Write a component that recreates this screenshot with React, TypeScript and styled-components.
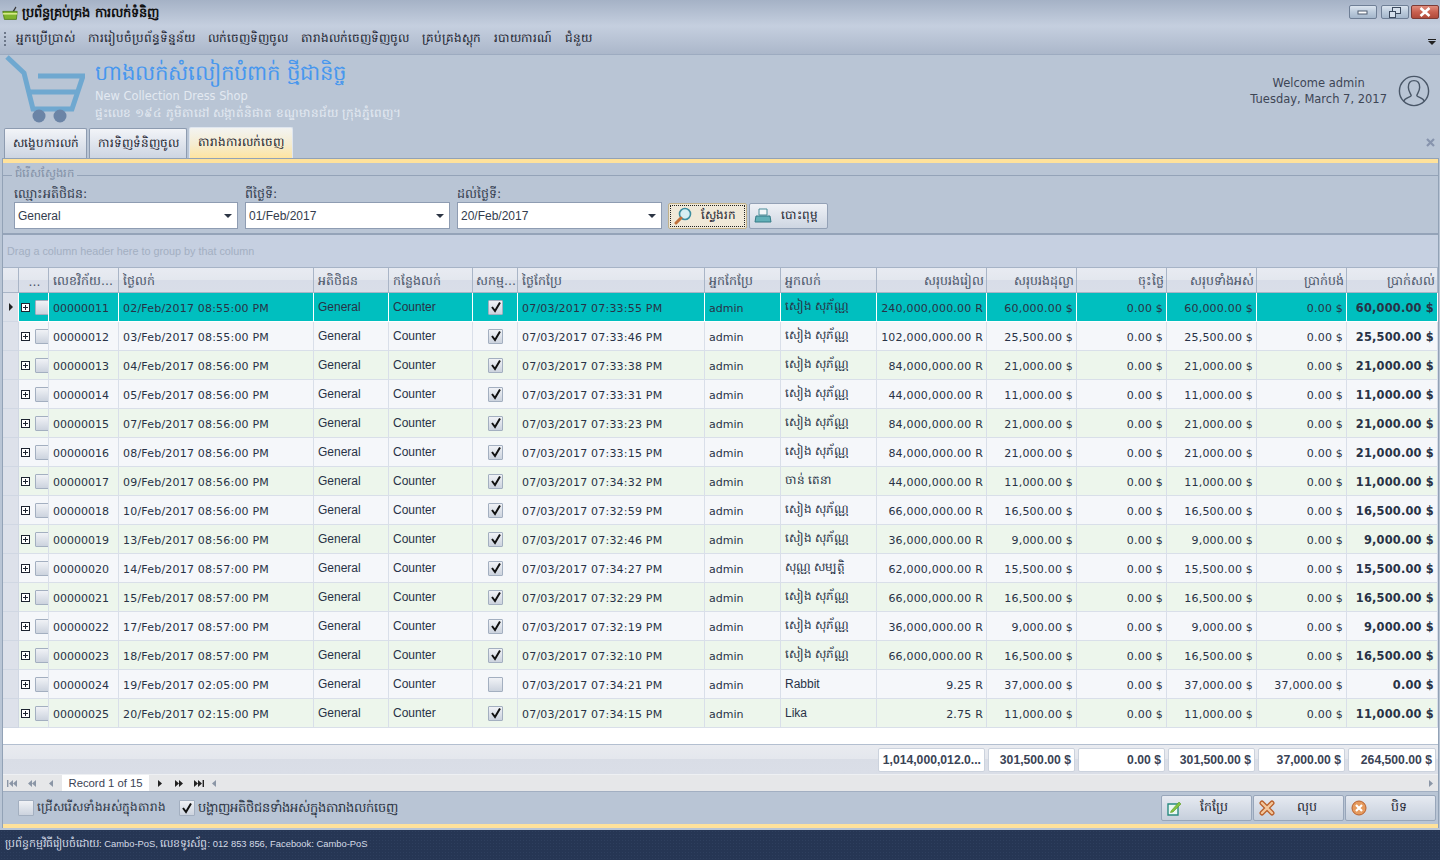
import * as React from 'react';
import styled, { createGlobalStyle } from 'styled-components';

const FONT = '"DejaVu Sans", "Noto Sans", sans-serif';
const PLAIN = '"Liberation Sans", "DejaVu Sans", sans-serif';
const COLUMNS = '16px 30px 70px 195px 75px 84px 45px 187px 76px 96px 110px 90px 90px 90px 90px 1fr';

const GlobalStyle = createGlobalStyle`
  html, body {
    margin: 0;
    padding: 0;
    height: 860px;
    overflow: hidden;
    background: #b9c5d5;
    font-family: ${FONT};
    font-size: 11px;
    color: #333c4e;
  }
`;

const Page = styled.div`
  width: 1440px;
  height: 860px;
  display: flex;
  flex-direction: column;
  overflow: hidden;
`;

// window chrome
const TitleBar = styled.div`
  height: 26px;
  flex: none;
  display: flex;
  align-items: center;
  padding: 0 1px 0 2px;
  gap: 4px;
  background: linear-gradient(#a5b2c6, #c5cfdf);
`;

const TitleText = styled.div`
  flex: 1;
  font-size: 13px;
  font-weight: bold;
  color: #111;
`;

const WinButtons = styled.div`
  display: flex;
  gap: 2px;
  margin-top: -2px;
`;

const WinButton = styled.div<{ $close?: boolean }>`
  width: 28px;
  height: 14px;
  box-sizing: border-box;
  border: 1px solid ${p => (p.$close ? '#7c3b36' : '#6f7f96')};
  border-radius: 2px;
  display: flex;
  align-items: center;
  justify-content: center;
  background: ${p => (p.$close
    ? 'linear-gradient(#e08c7c 0%, #c9604f 50%, #b04a3a 100%)'
    : 'linear-gradient(#dbe4ef 0%, #bccbdc 50%, #a4b6cb 100%)')};
  &:first-child {
    margin-right: 2px;
  }
`;

const MenuBar = styled.div`
  height: 29px;
  box-sizing: border-box;
  flex: none;
  display: flex;
  align-items: center;
  padding: 0 4px 3px 4px;
  border-bottom: 1px solid #9dabc0;
  background: linear-gradient(#c5cfdf, #abb7ca);
`;

const MenuGrip = styled.div`
  width: 2px;
  height: 14px;
  margin-right: 10px;
  background: repeating-linear-gradient(#6c7789 0 2px, transparent 2px 4px);
`;

const MenuItem = styled.div`
  margin-right: 13px;
  font-size: 12px;
  color: #1c2330;
`;

const MenuOverflow = styled.div`
  margin-left: auto;
  margin-top: 8px;
`;

// shop header
const ShopHeader = styled.div`
  height: 72px;
  flex: none;
  display: flex;
  padding-left: 5px;
`;

const ShopInfo = styled.div`
  margin-left: 10px;
  padding-top: 3px;
  display: flex;
  flex-direction: column;
`;

const ShopName = styled.div`
  font-size: 21.2px;
  line-height: 30px;
  color: #4797ee;
`;

const ShopSub = styled.div`
  font-size: 11.4px;
  line-height: 16px;
  color: #e3e9f1;
`;

const ShopAddress = styled.div`
  font-size: 12px;
  line-height: 18px;
  color: #e3e9f1;
`;

const Welcome = styled.div`
  margin-left: auto;
  padding: 20px 10px 0 0;
  display: flex;
  gap: 11px;
  color: #3e4655;
  font-size: 11.5px;
  line-height: 16px;
  text-align: center;
`;

// tabs
const TabRow = styled.div`
  height: 31px;
  flex: none;
  display: flex;
  align-items: flex-end;
  padding-left: 4px;
  gap: 2px;
`;

const Tab = styled.div<{ $active?: boolean; $w: number }>`
  width: ${p => p.$w}px;
  height: ${p => (p.$active ? 31 : 30)}px;
  box-sizing: border-box;
  display: flex;
  align-items: center;
  justify-content: center;
  font-size: 12px;
  color: #1c2330;
  border: 1px solid ${p => (p.$active ? '#dfe6ef' : '#8d9bb0')};
  border-bottom: none;
  border-radius: 2px 2px 0 0;
  background: ${p => (p.$active
    ? 'linear-gradient(#f3f4f2 0%, #f5ecd0 55%, #ffe4a0 100%)'
    : 'linear-gradient(#f2f4f8, #cdd5e2)')};
`;

const TabClose = styled.div`
  margin-left: auto;
  align-self: center;
  margin-right: 5px;
  display: flex;
`;

const Content = styled.div`
  flex: none;
  height: 670px;
  margin: 0 1px 0 2px;
  display: flex;
  flex-direction: column;
  border: 1px solid #92a2b6;
  border-bottom: none;
  box-sizing: border-box;
`;

const YellowStrip = styled.div`
  height: 4px;
  flex: none;
  background: #ffe29b;
`;

// search box
const SearchGroup = styled.div`
  height: 72px;
  flex: none;
  position: relative;
  box-sizing: border-box;
  padding: 20px 0 0 11px;
  display: flex;
  align-items: flex-end;
  border-bottom: 2px solid #94a3b8;
`;

const GroupLegend = styled.div`
  position: absolute;
  top: 3px;
  left: 9px;
  padding: 0 3px;
  background: #b9c5d5;
  color: #8290a6;
  font-size: 11.6px;
`;

const GroupRule = styled.div`
  position: absolute;
  top: 12px;
  left: 0;
  right: 0;
  height: 1px;
  background: #94a3b8;
`;

const SearchForm = styled.div`
  display: flex;
  align-items: flex-end;
  gap: 7px;
  padding-bottom: 4px;
`;

const Field = styled.div<{ $w: number }>`
  width: ${p => p.$w}px;
`;

const FieldLabel = styled.div`
  font-size: 12.6px;
  line-height: 16px;
  color: #333c4e;
`;

const Combo = styled.div`
  height: 27px;
  box-sizing: border-box;
  padding: 0 5px 0 3px;
  display: flex;
  align-items: center;
  justify-content: space-between;
  background: #fff;
  border: 1px solid #8e9cb2;
  font-family: ${PLAIN};
  font-size: 12px;
  color: #333c4e;
`;

const Caret = styled.div`
  width: 0;
  height: 0;
  border-left: 4px solid transparent;
  border-right: 4px solid transparent;
  border-top: 4px solid #2c3544;
`;

const SearchButtons = styled.div`
  display: flex;
  gap: 2px;
  margin-left: -1px;
`;

const ActionButton = styled.div<{ $focused?: boolean }>`
  width: 79px;
  height: 26px;
  box-sizing: border-box;
  display: flex;
  align-items: center;
  justify-content: center;
  gap: 9px;
  padding-right: 6px;
  font-size: 12px;
  color: #1c2330;
  border: 1px solid ${p => (p.$focused ? '#bfb08a' : '#93a1b6')};
  border-radius: 2px;
  background: ${p => (p.$focused
    ? '#f0e9d8'
    : 'linear-gradient(#eef1f6, #ced6e2)')};
  outline: ${p => (p.$focused ? '1px dotted #222' : 'none')};
  outline-offset: -3px;
`;

// grid
const GroupPanel = styled.div`
  height: 33px;
  box-sizing: border-box;
  flex: none;
  display: flex;
  align-items: center;
  padding-left: 4px;
  background: #c6d0e1;
  color: #a3afc2;
  font-family: ${PLAIN};
  font-size: 10.8px;
  border-bottom: 1px solid #a6b3c6;
`;

const Grid = styled.div`
  flex: none;
  background: #fff;
`;

const Row = styled.div<{ $h?: number }>`
  display: grid;
  grid-template-columns: ${COLUMNS};
  height: ${p => p.$h || 29}px;
  box-sizing: border-box;
`;

const HeadCell = styled.div<{ $right?: boolean; $center?: boolean }>`
  display: flex;
  align-items: center;
  justify-content: ${p => (p.$right ? 'flex-end' : p.$center ? 'center' : 'flex-start')};
  padding: 3px 2px 0 4px;
  overflow: hidden;
  white-space: nowrap;
  font-size: 12.5px;
  color: #4a5468;
  border-right: 1px solid #a9b5c7;
  border-bottom: 1px solid #a9b5c7;
  background: linear-gradient(#e8ebf2 0%, #e3e7ee 50%, #d8dde8 50%, #d9dee8 100%);
`;

const Indicator = styled.div<{ $selected?: boolean }>`
  display: flex;
  align-items: center;
  justify-content: center;
  background: #dde1ea;
  border-bottom: 1px solid #d0d7e3;
  border-right: 1px solid ${p => (p.$selected ? '#fff' : '#d0d7e3')};
`;

const Arrow = styled.div`
  width: 0;
  height: 0;
  border-top: 4px solid transparent;
  border-bottom: 4px solid transparent;
  border-left: 4px solid #222;
`;

const rowBg = (selected: boolean, odd: boolean) => (selected ? '#00bfbf' : odd ? '#edf6ec' : '#f5f7fa');

type CellProps = {
  $selected: boolean;
  $odd: boolean;
  $right?: boolean;
  $bold?: boolean;
  $center?: boolean;
  $plain?: boolean;
  $tight?: boolean;
};

const Cell = styled.div<CellProps>`
  display: flex;
  align-items: center;
  justify-content: ${p => (p.$right ? 'flex-end' : p.$center ? 'center' : 'flex-start')};
  padding: ${p => (p.$plain ? '0 3px 0 4px' : '2px 3px 0 4px')};
  overflow: hidden;
  white-space: nowrap;
  font-family: ${p => (p.$plain ? PLAIN : FONT)};
  font-size: ${p => (p.$plain ? 12 : p.$bold ? 11.4 : 11)}px;
  letter-spacing: ${p => (p.$plain || p.$tight ? 0 : 0.2)}px;
  font-weight: ${p => (p.$bold ? 'bold' : 'normal')};
  color: #283246;
  background: ${p => rowBg(p.$selected, p.$odd)};
  border-right: 1px solid ${p => (p.$selected ? '#fff' : '#d9dfe9')};
  border-bottom: 1px solid ${p => (p.$selected ? '#fff' : '#d9dfe9')};
`;

const ExpandCell = styled(Cell)`
  padding: 0 0 0 2px;
  gap: 5px;
`;

const PlusBox = styled.div`
  width: 9px;
  height: 9px;
  flex: none;
  position: relative;
  box-sizing: border-box;
  border: 1px solid #1c2330;
  background: #fff;
  &::before {
    content: '';
    position: absolute;
    left: 1px;
    right: 1px;
    top: 3px;
    height: 1px;
    background: #1c2330;
  }
  &::after {
    content: '';
    position: absolute;
    top: 1px;
    bottom: 1px;
    left: 3px;
    width: 1px;
    background: #1c2330;
  }
`;

const CheckBox = styled.div<{ $size?: number }>`
  width: ${p => p.$size || 15}px;
  height: ${p => p.$size || 15}px;
  flex: none;
  box-sizing: border-box;
  display: flex;
  align-items: center;
  justify-content: center;
  border: 1px solid #a3afc0;
  border-radius: 1px;
  background: linear-gradient(#f0f2f6, #ccd3de);
`;

const FooterCell = styled.div`
  display: flex;
  align-items: center;
  justify-content: flex-end;
  height: 24px;
  margin: 3px 2px 0 1px;
  padding: 0 3px;
  box-sizing: border-box;
  overflow: hidden;
  white-space: nowrap;
  font-family: ${PLAIN};
  font-weight: bold;
  font-size: 12.2px;
  color: #3a4355;
  background: #fff;
  border: 1px solid #cbd2dd;
  border-radius: 2px;
`;

const FooterBand = styled(Row)`
  background: linear-gradient(#e9ebf0 0%, #e4e7ed 48%, #d9dde6 48%, #dadee7 100%);
  border-top: 1px solid #b3bfd0;
`;

const Spacer = styled.div`
  height: 16px;
  background: #fff;
`;

const Navigator = styled.div`
  height: 18px;
  display: flex;
  align-items: center;
  background: #e6e7e9;
  border-top: 1px solid #eef0f3;
  border-bottom: 1px solid #a2afc2;
  color: #3a4355;
  font-family: ${PLAIN};
  font-size: 11.3px;
  box-sizing: border-box;
`;

const NavButton = styled.div`
  width: 19.5px;
  display: flex;
  justify-content: center;
`;

const NavRecord = styled.div`
  width: 87px;
  box-sizing: border-box;
  padding-left: 7px;
  margin-right: 1px;
  line-height: 16px;
  background: #fff;
`;

const NavTrack = styled.div`
  flex: 1;
  display: flex;
  align-items: center;
  justify-content: space-between;
  padding: 0 5px 0 4px;
`;

// bottom actions
const BottomBar = styled.div`
  flex: 1;
  display: flex;
  align-items: center;
  padding: 0 2px 0 15px;
`;

const CheckItem = styled.div<{ $fs: number }>`
  display: flex;
  align-items: center;
  gap: 3px;
  margin-right: 13px;
  font-size: ${p => p.$fs}px;
  color: #2b3342;
`;

const BottomButtons = styled.div`
  margin-left: auto;
  display: flex;
  gap: 1px;
`;

const BottomButton = styled.div`
  width: 91px;
  height: 26px;
  box-sizing: border-box;
  display: flex;
  align-items: center;
  padding: 0 5px;
  font-size: 12.6px;
  color: #1c2330;
  border: 1px solid #98a6ba;
  border-radius: 2px;
  background: linear-gradient(#e6eaf1, #c6cfdc);
`;

const BottomLabel = styled.span`
  flex: 1;
  text-align: center;
`;

const StatusBar = styled.div`
  height: 30px;
  box-sizing: border-box;
  margin-top: auto;
  flex: none;
  display: flex;
  align-items: center;
  padding: 0 0 3px 5px;
  background-color: #263654;
  background-image: radial-gradient(#2e3f5e 1px, transparent 1px);
  background-size: 3px 3px;
  color: #d5dbe6;
  font-family: ${PLAIN};
  font-size: 9.4px;
  white-space: pre;
`;

const StatusKhmer = styled.span`
  font-family: ${FONT};
  font-size: 11px;
`;

// icons
const BasketIcon = () => (
  <svg width="16" height="18" viewBox="0 0 20 18">
    <path d="M13 7 L17 1 L18 2 L15 7Z" fill="#333" />
    <path d="M1 7 H19 L18 17 H3Z" fill="#7fb42e" stroke="#4d7a17" />
    <path d="M1 10 H19" stroke="#d4e88a" strokeWidth="2" />
  </svg>
);

const CartLogo = () => (
  <svg width="80" height="70" viewBox="0 0 80 70">
    <path d="M2 2 L19 18 L28 54 H67 L78 21 H33" fill="none" stroke="#6fa8d0" strokeWidth="5" />
    <path d="M25 37 H72" stroke="#6fa8d0" strokeWidth="5" />
    <circle cx="34" cy="61" r="6.5" fill="#6b84a6" />
    <circle cx="55" cy="61" r="6.5" fill="#6b84a6" />
  </svg>
);

const UserIcon = () => (
  <svg width="32" height="32" viewBox="0 0 34 34" fill="none" stroke="#4a5768" strokeWidth="1.5">
    <circle cx="17" cy="17" r="15.5" />
    <path d="M6 28 C7 24 13 24 14 22 C14 20 11 18 11 13 C11 8 14 6 17 6 C20 6 23 8 23 13 C23 18 20 20 20 22 C21 24 27 24 28 28" />
  </svg>
);

const SearchIcon = () => (
  <svg width="18" height="18" viewBox="0 0 18 18">
    <circle cx="11" cy="7" r="5.5" fill="#d5eef2" stroke="#3c8ea0" strokeWidth="1.6" />
    <path d="M7 11 L2 16" stroke="#c0703a" strokeWidth="3" strokeLinecap="round" />
  </svg>
);

const PrintIcon = () => (
  <svg width="18" height="16" viewBox="0 0 18 16">
    <path d="M5 1 H13 V7 H5Z" fill="#f3f7f8" stroke="#4a8c99" />
    <path d="M2 8 H16 L17 14 H1Z" fill="#62b0b8" stroke="#357a86" />
  </svg>
);

const CheckMark = () => (
  <svg width="12" height="12" viewBox="0 0 12 12">
    <path d="M2 6 L5 10 L10 1.5" fill="none" stroke="#111" strokeWidth="2" />
  </svg>
);

const EditIcon = () => (
  <svg width="15" height="15" viewBox="0 0 15 15">
    <path d="M1 3 H11 V14 H1Z" fill="#eaf7f3" stroke="#2a8a80" strokeWidth="1.4" />
    <path d="M4 10 L12 1 L14 3 L6 11 L3.5 11.5Z" fill="#84c341" stroke="#5a9a22" strokeWidth="0.6" />
  </svg>
);

const DeleteIcon = () => (
  <svg width="16" height="16" viewBox="0 0 16 16">
    <path d="M3 3 L13 13 M13 3 L3 13" stroke="#b9602c" strokeWidth="5" strokeLinecap="round" />
    <path d="M3 3 L13 13 M13 3 L3 13" stroke="#f3c79c" strokeWidth="2.4" strokeLinecap="round" />
  </svg>
);

const CloseIcon = () => (
  <svg width="16" height="16" viewBox="0 0 16 16">
    <circle cx="8" cy="8" r="7" fill="#e59a5e" stroke="#b9602c" />
    <path d="M5 5 L11 11 M11 5 L5 11" stroke="#fff" strokeWidth="2.2" />
  </svg>
);

const TabCloseIcon = () => (
  <svg width="9" height="9" viewBox="0 0 9 9"><path d="M1 1 L8 8 M8 1 L1 8" stroke="#8794ad" strokeWidth="2.2" /></svg>
);

// navigator glyph: a run of triangles, optionally with an end bar
const NavIcon = ({ dir, count, bar, dim }: { dir: 'l' | 'r'; count: number; bar?: boolean; dim?: boolean }) => {
  const color = dim ? '#8b96a6' : '#222';
  const offset = bar ? 2 : 0;
  const tris = Array.from({ length: count }, (_, i) => {
    const x = offset + i * 4;
    return `M${x + 4} 0 L${x} 3.5 L${x + 4} 7Z`;
  }).join(' ');
  const w = offset + count * 4 + 1;
  return (
    <svg width={w} height="7" viewBox={`0 0 ${w} 7`} style={dir === 'r' ? { transform: 'scaleX(-1)' } : undefined}>
      <path d={tris} fill={color} />
      {bar && <rect x="0" y="0" width="1.4" height="7" fill={color} />}
    </svg>
  );
};

const MIN = (
  <svg width="12" height="8" viewBox="0 0 12 8"><rect x="1" y="3" width="9" height="3" fill="#fff" stroke="#4c5a6e" /></svg>
);
const RESTORE = (
  <svg width="12" height="11" viewBox="0 0 12 11" fill="#d6e0ec" stroke="#3c4a5e">
    <rect x="3.5" y="0.5" width="8" height="6" />
    <rect x="0.5" y="4.5" width="6" height="6" />
  </svg>
);
const CLOSE_X = (
  <svg width="12" height="10" viewBox="0 0 12 10"><path d="M1.5 1 L10.5 9 M10.5 1 L1.5 9" stroke="#fff" strokeWidth="2.6" /></svg>
);

const SOPHAN = 'សៀង សុភ័ណ្ណ';

const ROWS = [
  { id: '00000011', sale: '02/Feb/2017 08:55:00 PM', mod: '07:33:55', seller: SOPHAN, riel: '240,000,000.00', usd: '60,000.00' },
  { id: '00000012', sale: '03/Feb/2017 08:55:00 PM', mod: '07:33:46', seller: SOPHAN, riel: '102,000,000.00', usd: '25,500.00' },
  { id: '00000013', sale: '04/Feb/2017 08:56:00 PM', mod: '07:33:38', seller: SOPHAN, riel: '84,000,000.00', usd: '21,000.00' },
  { id: '00000014', sale: '05/Feb/2017 08:56:00 PM', mod: '07:33:31', seller: SOPHAN, riel: '44,000,000.00', usd: '11,000.00' },
  { id: '00000015', sale: '07/Feb/2017 08:56:00 PM', mod: '07:33:23', seller: SOPHAN, riel: '84,000,000.00', usd: '21,000.00' },
  { id: '00000016', sale: '08/Feb/2017 08:56:00 PM', mod: '07:33:15', seller: SOPHAN, riel: '84,000,000.00', usd: '21,000.00' },
  { id: '00000017', sale: '09/Feb/2017 08:56:00 PM', mod: '07:34:32', seller: 'ចាន់ តេនា', riel: '44,000,000.00', usd: '11,000.00' },
  { id: '00000018', sale: '10/Feb/2017 08:56:00 PM', mod: '07:32:59', seller: SOPHAN, riel: '66,000,000.00', usd: '16,500.00' },
  { id: '00000019', sale: '13/Feb/2017 08:56:00 PM', mod: '07:32:46', seller: SOPHAN, riel: '36,000,000.00', usd: '9,000.00' },
  { id: '00000020', sale: '14/Feb/2017 08:57:00 PM', mod: '07:34:27', seller: 'សុណ្ណ សម្បត្តិ', riel: '62,000,000.00', usd: '15,500.00' },
  { id: '00000021', sale: '15/Feb/2017 08:57:00 PM', mod: '07:32:29', seller: SOPHAN, riel: '66,000,000.00', usd: '16,500.00' },
  { id: '00000022', sale: '17/Feb/2017 08:57:00 PM', mod: '07:32:19', seller: SOPHAN, riel: '36,000,000.00', usd: '9,000.00' },
  { id: '00000023', sale: '18/Feb/2017 08:57:00 PM', mod: '07:32:10', seller: SOPHAN, riel: '66,000,000.00', usd: '16,500.00' },
  { id: '00000024', sale: '19/Feb/2017 02:05:00 PM', mod: '07:34:21', seller: 'Rabbit', riel: '9.25', usd: '37,000.00', paid: '37,000.00', balance: '0.00', inactive: true },
  { id: '00000025', sale: '20/Feb/2017 02:15:00 PM', mod: '07:34:15', seller: 'Lika', riel: '2.75', usd: '11,000.00' },
];

const MENU = ['អ្នកប្រើប្រាស់', 'ការរៀបចំប្រព័ន្ធទិន្នន័យ', 'លក់ចេញទិញចូល', 'តារាងលក់ចេញទិញចូល', 'គ្រប់គ្រងស្តុក', 'របាយការណ៍', 'ជំនួយ'];

const HEADERS: [string, 'l' | 'r' | 'c'][] = [
  ['...', 'c'], ['លេខវិក័យ...', 'l'], ['ថ្ងៃលក់', 'l'], ['អតិថិជន', 'l'], ['កន្លែងលក់', 'l'], ['សកម្ម...', 'c'],
  ['ថ្ងៃកែប្រែ', 'l'], ['អ្នកកែប្រែ', 'l'], ['អ្នកលក់', 'l'], ['សរុបរងរៀល', 'r'], ['សរុបរងដុល្លា', 'r'],
  ['ចុះថ្លៃ', 'r'], ['សរុបទាំងអស់', 'r'], ['ប្រាក់បង់', 'r'], ['ប្រាក់សល់', 'r'],
];

const TOTALS = ['1,014,000,012.0...', '301,500.00 $', '0.00 $', '301,500.00 $', '37,000.00 $', '264,500.00 $'];

export default function App() {
  return (
    <Page>
      <GlobalStyle />
      <TitleBar>
        <BasketIcon />
        <TitleText>ប្រព័ន្ធគ្រប់គ្រង ការលក់ទំនិញ</TitleText>
        <WinButtons>
          <WinButton>{MIN}</WinButton>
          <WinButton>{RESTORE}</WinButton>
          <WinButton $close>{CLOSE_X}</WinButton>
        </WinButtons>
      </TitleBar>
      <MenuBar>
        <MenuGrip />
        {MENU.map(item => <MenuItem key={item}>{item}</MenuItem>)}
        <MenuOverflow>
          <svg width="8" height="8" viewBox="0 0 8 8"><path d="M0 1 H8 V2 H0Z M0 3 H8 L4 7Z" fill="#222" /></svg>
        </MenuOverflow>
      </MenuBar>
      <ShopHeader>
        <CartLogo />
        <ShopInfo>
          <ShopName>ហាងលក់សំលៀកបំពាក់ ថ្មីជានិច្ច</ShopName>
          <ShopSub>New Collection Dress Shop</ShopSub>
          <ShopAddress>ផ្ទះលេខ ១៩៤ ភូមិតាដៅ សង្កាត់និផាត ខណ្ឌមានជ័យ ក្រុងភ្នំពេញ។</ShopAddress>
        </ShopInfo>
        <Welcome>
          <div>Welcome admin<br />Tuesday, March 7, 2017</div>
          <UserIcon />
        </Welcome>
      </ShopHeader>
      <TabRow>
        <Tab $w={83}>សង្ខេបការលក់</Tab>
        <Tab $w={98}>ការទិញទំនិញចូល</Tab>
        <Tab $active $w={104}>តារាងការលក់ចេញ</Tab>
        <TabClose><TabCloseIcon /></TabClose>
      </TabRow>
      <Content>
        <YellowStrip />
        <SearchGroup>
          <GroupRule />
          <GroupLegend>ជំរើសស្វែងរក</GroupLegend>
          <SearchForm>
            <Field $w={224}>
              <FieldLabel>ឈ្មោះអតិថិជន:</FieldLabel>
              <Combo>General<Caret /></Combo>
            </Field>
            <Field $w={205}>
              <FieldLabel>ពីថ្ងៃទី:</FieldLabel>
              <Combo>01/Feb/2017<Caret /></Combo>
            </Field>
            <Field $w={205}>
              <FieldLabel>ដល់ថ្ងៃទី:</FieldLabel>
              <Combo>20/Feb/2017<Caret /></Combo>
            </Field>
            <SearchButtons>
              <ActionButton $focused><SearchIcon />ស្វែងរក</ActionButton>
              <ActionButton><PrintIcon />បោះពុម្ព</ActionButton>
            </SearchButtons>
          </SearchForm>
        </SearchGroup>
        <GroupPanel>Drag a column header here to group by that column</GroupPanel>
        <Grid>
          <Row $h={25}>
            <HeadCell />
            {HEADERS.map(([label, align]) => (
              <HeadCell key={label} $right={align === 'r'} $center={align === 'c'}>{label}</HeadCell>
            ))}
          </Row>
          {ROWS.map((r, i) => {
            const sel = i === 0;
            const odd = i % 2 === 0 && !sel;
            const c = { $selected: sel, $odd: odd };
            return (
              <Row key={r.id}>
                <Indicator $selected={sel}>{sel && <Arrow />}</Indicator>
                <ExpandCell {...c}><PlusBox /><CheckBox /></ExpandCell>
                <Cell {...c} $tight>{r.id}</Cell>
                <Cell {...c}>{r.sale}</Cell>
                <Cell {...c} $plain>General</Cell>
                <Cell {...c} $plain>Counter</Cell>
                <Cell {...c} $plain $center><CheckBox>{!r.inactive && <CheckMark />}</CheckBox></Cell>
                <Cell {...c}>07/03/2017 {r.mod} PM</Cell>
                <Cell {...c} $tight>admin</Cell>
                <Cell {...c} $plain>{r.seller}</Cell>
                <Cell {...c} $right>{r.riel} R</Cell>
                <Cell {...c} $right>{r.usd} $</Cell>
                <Cell {...c} $right>0.00 $</Cell>
                <Cell {...c} $right>{r.usd} $</Cell>
                <Cell {...c} $right>{r.paid || '0.00'} $</Cell>
                <Cell {...c} $right $bold>{r.balance || r.usd} $</Cell>
              </Row>
            );
          })}
          <Spacer />
          <FooterBand $h={30}>
            <div /><div /><div /><div /><div /><div /><div /><div /><div /><div />
            {TOTALS.map((t, i) => <FooterCell key={i}>{t}</FooterCell>)}
          </FooterBand>
          <Navigator>
            <NavButton><NavIcon dir="l" count={2} bar dim /></NavButton>
            <NavButton><NavIcon dir="l" count={2} dim /></NavButton>
            <NavButton><NavIcon dir="l" count={1} dim /></NavButton>
            <NavRecord>Record 1 of 15</NavRecord>
            <NavButton><NavIcon dir="r" count={1} /></NavButton>
            <NavButton><NavIcon dir="r" count={2} /></NavButton>
            <NavButton><NavIcon dir="r" count={2} bar /></NavButton>
            <NavTrack>
              <NavIcon dir="l" count={1} dim />
              <NavIcon dir="r" count={1} dim />
            </NavTrack>
          </Navigator>
        </Grid>
        <BottomBar>
          <CheckItem $fs={12}><CheckBox $size={16} />ជ្រើសរើសទាំងអស់ក្នុងតារាង</CheckItem>
          <CheckItem $fs={13}><CheckBox $size={16}><CheckMark /></CheckBox>បង្ហាញអតិថិជនទាំងអស់ក្នុងតារាងលក់ចេញ</CheckItem>
          <BottomButtons>
            <BottomButton><EditIcon /><BottomLabel>កែប្រែ</BottomLabel></BottomButton>
            <BottomButton><DeleteIcon /><BottomLabel>លុប</BottomLabel></BottomButton>
            <BottomButton><CloseIcon /><BottomLabel>បិទ</BottomLabel></BottomButton>
          </BottomButtons>
        </BottomBar>
        <YellowStrip />
      </Content>
      <StatusBar>
        <StatusKhmer>ប្រព័ន្ធកម្មវិធីរៀបចំដោយ</StatusKhmer>: Cambo-PoS, <StatusKhmer>លេខទូរស័ព្ទ</StatusKhmer>: 012 853 856, Facebook: Cambo-PoS
      </StatusBar>
    </Page>
  );
}
